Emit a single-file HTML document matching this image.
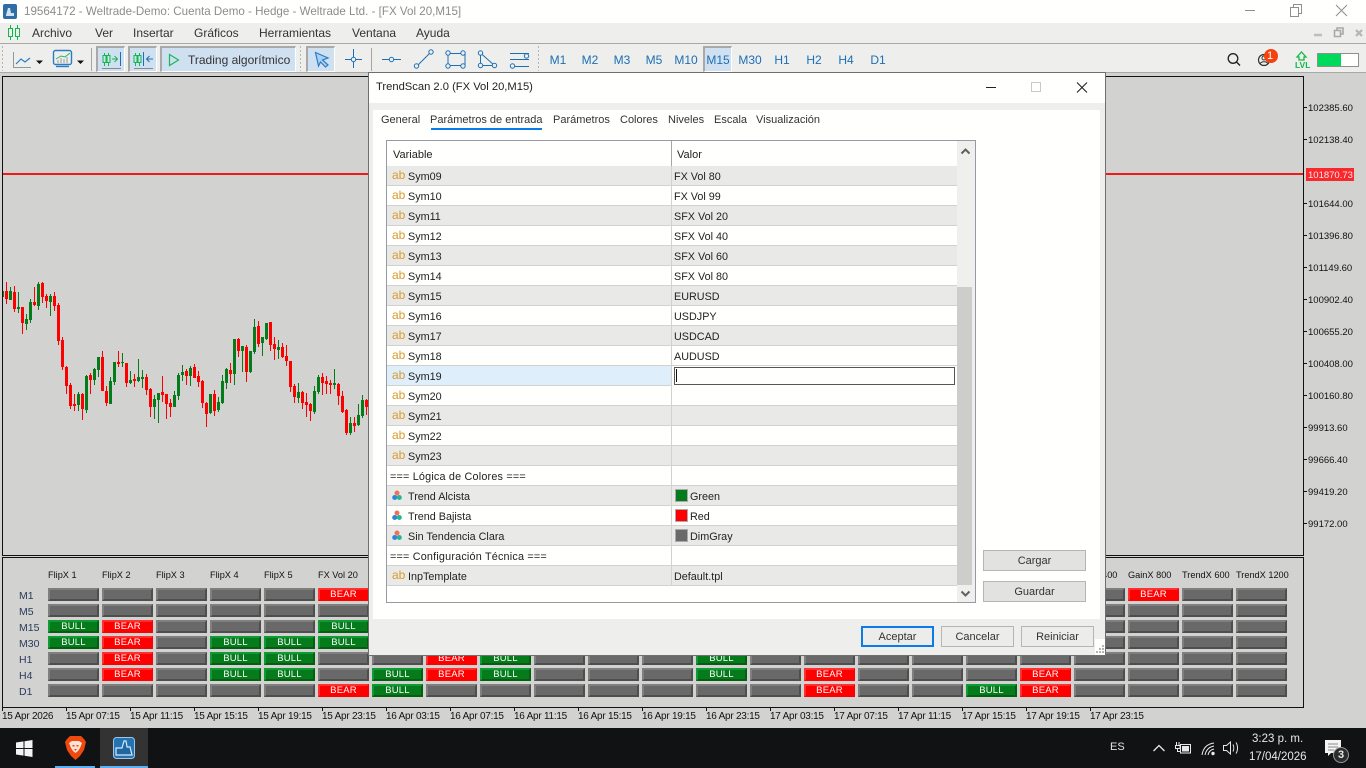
<!DOCTYPE html>
<html lang="es"><head><meta charset="utf-8"><title>TrendScan</title>
<style>
*{box-sizing:border-box}
html,body{margin:0;padding:0;width:1366px;height:768px;overflow:hidden;background:#d2d2d0;font-family:"Liberation Sans",sans-serif;font-size:12px;color:#222}
.a,.t{position:absolute}
.t{white-space:nowrap;line-height:14px}
.tf{top:52px;width:30px;text-align:center;font-size:12px;color:#1c6fb5;line-height:16px}
.on{position:absolute;background:#cfe0f1;border:1px solid #fff;border-top-color:#a9a9a9;border-left-color:#a9a9a9;border-width:2px 1px 1px 2px}
.m{top:26px;font-size:12px;color:#333}
.y{left:1308px;font-size:9.5px;color:#111;line-height:12px}
.x{top:711px;font-size:10px;color:#111;line-height:12px;letter-spacing:-.25px}
.tick{position:absolute;top:707px;width:1px;height:4px;background:#111}
.row{position:absolute;left:48px;display:flex;gap:3px}
.row b{display:block;width:51px;height:13px;background:#696969;border:solid;border-width:2px 2px 2px 2px;border-color:#7f7f7f #4e4e4e #4e4e4e #7f7f7f;font:normal 9.5px/9px "Liberation Sans",sans-serif;color:#fff;text-align:center;letter-spacing:.2px}
.row b.r{background:#fe0000;border-color:#ff3030 #fe0000 #fe0000 #ff3030}
.row b.u{background:#067b1b;border-color:#0f9a35 #04600f #04600f #0f9a35}
.cap{top:569px;font-size:9.2px;color:#111;line-height:12px}
.rl{left:19px;font-size:10.5px;color:#2b3a5c;line-height:14px}
.tab{top:113px;font-size:11px;color:#333}
.grow{position:absolute;left:0;width:570px;height:20px;border-bottom:1px solid #d2d2d0;background:#fffffd}
.grow.o{background:#e9e9e7}
.grow i{position:absolute;left:284px;top:0;width:1px;height:20px;background:#d2d2d0}
.grow .ab{position:absolute;left:5px;top:2px;font-style:normal;font-size:12px;color:#d99a2e;line-height:14px}
.grow .n{position:absolute;left:21px;top:4px;font-size:10.8px;line-height:14px;color:#222;white-space:nowrap}
.grow .v{position:absolute;left:287px;top:4px;font-size:10.8px;line-height:14px;color:#222;white-space:nowrap}
.grow .h{position:absolute;left:3px;top:4px;font-size:10.8px;line-height:14px;color:#222;white-space:nowrap;letter-spacing:.2px}
.grow svg{position:absolute;left:5px;top:4px}
.sw{position:absolute;left:288px;top:3px;width:13px;height:13px;border:1px solid #aaa}
.grow .sv{left:303px}
.btn{position:absolute;height:21px;background:#e2e2e0;border:1px solid #b5b5b3;text-align:center;font-size:11px;line-height:21px;color:#333}
.btn2{background:#ecECEa}
</style></head><body>

<!-- title bar -->
<div class="a" style="left:0;top:0;width:1366px;height:23px;background:#fffffd"></div>
<svg class="a" style="left:3px;top:4px" width="14" height="15" viewBox="0 0 14 15"><rect width="14" height="15" rx="2" fill="#2f6ea5"/><path d="M3 11 L5 4 L7 4 L8 9 L11 9 L11 12 L3 12Z" fill="#cfe2f2"/></svg>
<div class="t" style="left:24px;top:5px;font-size:11.6px;color:#8c8c8c">19564172 - Weltrade-Demo: Cuenta Demo - Hedge - Weltrade Ltd. - [FX Vol 20,M15]</div>
<svg class="a" style="left:1230px;top:0" width="136" height="23" viewBox="0 0 136 23" fill="none" stroke="#8f8f8f"><path d="M15 10.5H25"/><path d="M60.5 7.5h8v9h-8zM63.5 7.5v-3h8v9h-3" /><path d="M106 5L117 16M117 5L106 16"/></svg>

<!-- menu -->
<div class="a" style="left:0;top:23px;width:1366px;height:21px;background:#eeeeec;border-bottom:1px solid #a8a8a6"></div>
<svg class="a" style="left:7px;top:25px" width="14" height="16" viewBox="0 0 14 16" fill="none" stroke="#12b84a"><path d="M3.5 0V15M10.5 0V15"/><path d="M1.5 3.5h4v8h-4zM8.5 3.5h4v8h-4z" fill="#eeeeec"/></svg>
<div class="t m" style="left:32px">Archivo</div>
<div class="t m" style="left:95px">Ver</div>
<div class="t m" style="left:133px">Insertar</div>
<div class="t m" style="left:194px">Gráficos</div>
<div class="t m" style="left:259px">Herramientas</div>
<div class="t m" style="left:352px">Ventana</div>
<div class="t m" style="left:416px">Ayuda</div>
<svg class="a" style="left:1310px;top:26px" width="56" height="14" viewBox="0 0 56 14"><path d="M4 9H12" stroke="#bdbdbb" stroke-width="2.5"/><path d="M24.5 4.5h6v6h-6z M27 4V2h6v6h-2" fill="none" stroke="#a9a9a7" stroke-width="1.6"/><path d="M46 4L52 10M52 4L46 10" stroke="#b5b5b3" stroke-width="2.2"/></svg>

<!-- toolbar -->
<div class="a" style="left:0;top:44px;width:1366px;height:29px;background:#eeeeec;border-bottom:1px solid #a8a8a6"></div>
<div class="a" style="left:0;top:73px;width:1366px;height:3px;background:#d2d2d0"></div>
<div class="on" style="left:96px;top:46px;width:29px;height:26px"></div>
<div class="on" style="left:128px;top:46px;width:29px;height:26px"></div>
<div class="on" style="left:160px;top:46px;width:136px;height:26px"></div>
<div class="on" style="left:306px;top:46px;width:29px;height:26px"></div>
<div class="on" style="left:703px;top:46px;width:29px;height:26px"></div>

<svg class="a" style="left:0;top:44px" width="1366" height="30" viewBox="0 44 1366 30" fill="none">
 <path d="M2.5 46V71M300.5 46V71M538.5 46V71" stroke="#b5b5b3" stroke-dasharray="2 2"/>
 <path d="M91.5 48V71M371.5 48V71" stroke="#a5a5a3"/>
 <path d="M13.5 52V67.5H31" stroke="#8d97a0"/>
 <path d="M16 64L21 59L25 62L30 58" stroke="#2c7cc4" stroke-width="1.2"/>
 <path d="M36 60.5h7l-3.500 3.500z" fill="#111"/>
 <rect x="53.500" y="50.500" width="18" height="14" rx="2" stroke="#2c7cc4" stroke-width="1.400"/>
 <path d="M56 66.500h13" stroke="#2c7cc4" stroke-width="1.400"/>
 <path d="M56 59L61 56L65 57L70 53" stroke="#20b860"/>
 <path d="M58 63V60M61 63V58M64 63V59M67 63V57" stroke="#9a9a9a"/>
 <path d="M77 60.500h7l-3.500 3.500z" fill="#111"/>
 <!-- btn1 -->
 <path d="M104.500 53V66M108.500 53V66" stroke="#12b84a"/><path d="M103 55.500h3v7h-3zM107 55.500h3v7h-3z" stroke="#12b84a" fill="#cfe0f1"/>
 <path d="M112 59H117M114.500 56L117.500 59L114.500 62" stroke="#12b84a"/><path d="M120.500 52V66" stroke="#1c6fb5"/>
 <path d="M102 68.500H121" stroke="#8a8a8a"/>
 <!-- btn2 -->
 <path d="M135.500 53V66M139.500 53V66" stroke="#12b84a"/><path d="M134 55.500h3v7h-3zM138 55.500h3v7h-3z" stroke="#12b84a" fill="#cfe0f1"/>
 <path d="M143.500 52V66" stroke="#1c6fb5"/><path d="M153 59H147M149.500 56L146.500 59L149.500 62" stroke="#1c6fb5"/>
 <path d="M134 68.500H153" stroke="#8a8a8a"/>
 <!-- play -->
 <path d="M169.500 54.500L178.500 60L169.500 65.500Z" stroke="#17b957" stroke-width="1.200"/>
 <!-- cursor -->
 <path d="M315.500 52.500L328 58L322.500 60L328 65L325.500 67L320.500 62L318.500 66Z" fill="#a9d2f2" stroke="#2c7cc4" stroke-width="1.200"/>
 <!-- crosshair -->
 <path d="M353.500 49V68M345 59.500H362" stroke="#1c6fb5"/><circle cx="353.500" cy="59.500" r="2.200" stroke="#1c6fb5" fill="#eeeeec"/>
 <!-- hline -->
 <path d="M382 59.500H401" stroke="#1c6fb5"/><circle cx="391.500" cy="59.500" r="2.200" stroke="#1c6fb5" fill="#eeeeec"/>
 <!-- trend -->
 <path d="M416.500 66.500L431 52" stroke="#1c6fb5"/><circle cx="416.500" cy="66" r="2.200" stroke="#1c6fb5" fill="#eeeeec"/><circle cx="431" cy="52" r="2.200" stroke="#1c6fb5" fill="#eeeeec"/>
 <!-- rect -->
 <path d="M448 53.500H465V65.500H448Z" stroke="#1c6fb5"/>
 <circle cx="448" cy="53" r="2.200" stroke="#1c6fb5" fill="#eeeeec"/><circle cx="448" cy="66" r="2.200" stroke="#1c6fb5" fill="#eeeeec"/><circle cx="463" cy="53" r="2.200" stroke="#1c6fb5" fill="#eeeeec"/><circle cx="463" cy="66" r="2.200" stroke="#1c6fb5" fill="#eeeeec"/>
 <!-- triangle -->
 <path d="M480.500 53V65.500H494.500Z" stroke="#1c6fb5"/>
 <circle cx="480.500" cy="53" r="2.200" stroke="#1c6fb5" fill="#eeeeec"/><circle cx="480.500" cy="65.500" r="2.200" stroke="#1c6fb5" fill="#eeeeec"/><circle cx="494.500" cy="65.500" r="2.200" stroke="#1c6fb5" fill="#eeeeec"/>
 <!-- fibo -->
 <path d="M510 53.500H529M510 59.500H529M510 66.500H529" stroke="#1c6fb5"/>
 <circle cx="526.500" cy="56" r="2.200" stroke="#1c6fb5" fill="#eeeeec"/><circle cx="512.500" cy="66" r="2.200" stroke="#1c6fb5" fill="#eeeeec"/>
 <!-- search -->
 <circle cx="1233" cy="58.500" r="4.800" stroke="#222" stroke-width="1.300"/><path d="M1236.500 62L1240 65.500" stroke="#222" stroke-width="1.400"/>
 <!-- profile -->
 <circle cx="1264" cy="60" r="5.500" stroke="#333" stroke-width="1.200"/><circle cx="1264" cy="58" r="2" stroke="#333"/><path d="M1260 64C1261 61 1267 61 1268 64" stroke="#333"/>
 <circle cx="1271" cy="56" r="7" fill="#f4430e"/>
 <!-- level arrow -->
 <path d="M1301.500 52L1306 57H1304V60H1299V57H1297Z" stroke="#12b84a" stroke-width="1.300"/>
</svg>
<div class="t" style="left:188px;top:52px;font-size:12px;color:#333;line-height:16px">Trading algorítmico</div>
<div class="t tf" style="left:543px">M1</div><div class="t tf" style="left:575px">M2</div><div class="t tf" style="left:607px">M3</div><div class="t tf" style="left:639px">M5</div><div class="t tf" style="left:671px">M10</div><div class="t tf" style="left:703px">M15</div><div class="t tf" style="left:735px">M30</div><div class="t tf" style="left:767px">H1</div><div class="t tf" style="left:799px">H2</div><div class="t tf" style="left:831px">H4</div><div class="t tf" style="left:863px">D1</div>
<div class="t" style="left:1267px;top:49px;font-size:11px;color:#fff;line-height:14px">1</div>
<div class="t" style="left:1295px;top:60px;font-size:8.500px;color:#12b84a;line-height:10px;font-weight:bold">LVL</div>
<div class="a" style="left:1317px;top:53px;width:42px;height:14px;border:1px solid #8f8f8f;background:#fffffd"><div style="width:23px;height:12px;background:#00da5c"></div></div>

<!-- chart frames -->
<div class="a" style="left:2px;top:76px;width:1302px;height:480px;border:1px solid #111;border-width:1px 1px 1px 1px;background:#d2d2d0"></div>
<div class="a" style="left:2px;top:557px;width:1302px;height:151px;border:1px solid #111;background:#d2d2d0"></div>

<!-- candles -->
<svg class="a" style="left:3px;top:270px;overflow:hidden" width="367" height="180" viewBox="9 0 1101 540" fill="none">
<g transform="translate(1.500 0)">
<path stroke="#ff0000" stroke-width="3" d="M18 36V102M42 48V126M66 111V192M102 51V108M126 36V99M138 72V114M162 66V123M174 99V225M186 201V300M198 288V372M210 339V417M222 372V423M246 369V450M270 309V372M306 243V363M318 348V408M354 243V291M378 279V351M402 312V351M438 312V375M450 354V441M486 318V396M498 372V447M510 387V441M558 297V345M582 282V324M594 303V351M606 330V414M618 396V471M642 360V438M690 279V339M714 204V261M738 225V336M774 153V231M810 156V243M822 201V270M846 219V264M858 225V288M870 273V366M882 342V399M906 363V417M918 369V441M930 399V453M966 309V375M978 318V372M990 330V372M1014 339V405M1026 363V429M1038 417V495M1062 441V486M1098 387V435"/>
<path stroke="#ff0000" stroke-width="9" d="M18 63V87M42 66V117M66 111V159M102 96V105M126 39V81M138 78V93M162 78V108M174 105V213M186 210V291M198 291V348M210 345V408M222 402V408M246 372V417M270 315V330M306 261V363M318 363V399M354 276V282M378 279V339M402 327V333M438 321V360M450 357V411M486 366V375M498 372V402M510 399V411M558 303V318M582 291V324M594 318V336M606 333V399M618 399V432M642 372V423M690 300V312M714 207V243M738 231V306M774 168V222M810 156V225M822 222V237M846 231V261M858 258V273M870 273V351M882 348V381M906 366V399M918 396V405M930 402V423M966 321V339M978 333V342M990 339V345M1014 342V378M1026 378V426M1038 420V489M1062 459V468M1098 390V411"/>
<path stroke="#067b1b" stroke-width="3" d="M30 51V90M54 66V129M78 132V180M90 87V159M114 36V120M150 72V138M234 366V423M258 315V429M282 294V345M294 261V321M330 321V402M342 276V345M366 249V291M390 303V342M414 267V336M426 300V354M462 375V447M474 369V459M522 363V411M534 309V390M546 285V333M570 288V348M630 372V432M654 381V426M666 315V402M678 294V357M702 207V345M726 228V306M750 243V309M762 147V252M786 201V258M798 159V210M834 210V267M894 339V399M942 348V432M954 315V372M1002 297V357M1050 441V495M1074 402V468M1086 375V444"/>
<path stroke="#067b1b" stroke-width="9" d="M6 63V81M30 63V90M54 111V117M78 147V162M90 96V150M114 42V108M150 78V96M234 372V405M258 318V420M282 297V330M294 261V300M330 333V402M342 276V336M366 276V279M390 330V339M414 321V333M426 321V327M462 387V411M474 369V390M522 375V411M534 315V378M546 306V315M570 294V318M630 372V429M654 396V420M666 333V399M678 297V339M702 207V312M726 228V243M750 243V306M762 171V246M786 201V219M798 159V207M834 231V240M894 366V384M942 363V426M954 321V366M1002 339V345M1050 459V489M1074 435V465M1086 390V438"/>
</g></svg>

<!-- price line + axis -->
<div class="a" style="left:3px;top:173px;width:1300px;height:2px;background:#f01a1a"></div>
<div class="a" style="left:1306px;top:168px;width:48px;height:13px;background:#f8282c"></div>
<svg class="a" style="left:1304px;top:100px" width="4" height="430" viewBox="0 0 4 430" stroke="#111"><path d="M0 7.500H3M0 39.500H3M0 103.500H3M0 135.500H3M0 167.500H3M0 199.500H3M0 231.500H3M0 263.500H3M0 295.500H3M0 327.500H3M0 359.500H3M0 391.500H3M0 423.500H3"/></svg>
<div class="t y" style="top:103px">102385.60</div>
<div class="t y" style="top:135px">102138.40</div>
<div class="t y" style="top:170px;color:#ffe9e9">101870.73</div>
<div class="t y" style="top:199px">101644.00</div>
<div class="t y" style="top:231px">101396.80</div>
<div class="t y" style="top:263px">101149.60</div>
<div class="t y" style="top:295px">100902.40</div>
<div class="t y" style="top:327px">100655.20</div>
<div class="t y" style="top:359px">100408.00</div>
<div class="t y" style="top:391px">100160.80</div>
<div class="t y" style="top:423px">99913.60</div>
<div class="t y" style="top:455px">99666.40</div>
<div class="t y" style="top:487px">99419.20</div>
<div class="t y" style="top:519px">99172.00</div>

<!-- panel captions -->
<div class="t cap" style="left:48px">FlipX 1</div><div class="t cap" style="left:102px">FlipX 2</div><div class="t cap" style="left:156px">FlipX 3</div><div class="t cap" style="left:210px">FlipX 4</div><div class="t cap" style="left:264px">FlipX 5</div><div class="t cap" style="left:318px">FX Vol 20</div>
<div class="t cap" style="left:1074px">GainX 400</div><div class="t cap" style="left:1128px">GainX 800</div><div class="t cap" style="left:1182px">TrendX 600</div><div class="t cap" style="left:1236px">TrendX 1200</div>
<div class="t rl" style="top:589px">M1</div><div class="t rl" style="top:605px">M5</div><div class="t rl" style="top:621px">M15</div><div class="t rl" style="top:637px">M30</div><div class="t rl" style="top:653px">H1</div><div class="t rl" style="top:669px">H4</div><div class="t rl" style="top:685px">D1</div>

<div class="row" style="top:588px"><b></b><b></b><b></b><b></b><b></b><b class="r">BEAR</b><b></b><b></b><b></b><b></b><b></b><b></b><b></b><b></b><b></b><b></b><b></b><b></b><b></b><b></b><b class="r">BEAR</b><b></b><b></b></div>
<div class="row" style="top:604px"><b></b><b></b><b></b><b></b><b></b><b></b><b></b><b></b><b></b><b></b><b></b><b></b><b></b><b></b><b></b><b></b><b></b><b></b><b></b><b></b><b></b><b></b><b></b></div>
<div class="row" style="top:620px"><b class="u">BULL</b><b class="r">BEAR</b><b></b><b></b><b></b><b class="u">BULL</b><b></b><b></b><b></b><b></b><b></b><b></b><b></b><b></b><b></b><b></b><b></b><b></b><b></b><b></b><b></b><b></b><b></b></div>
<div class="row" style="top:636px"><b class="u">BULL</b><b class="r">BEAR</b><b></b><b class="u">BULL</b><b class="u">BULL</b><b class="u">BULL</b><b></b><b></b><b></b><b></b><b></b><b></b><b></b><b></b><b></b><b></b><b></b><b></b><b></b><b></b><b></b><b></b><b></b></div>
<div class="row" style="top:652px"><b></b><b class="r">BEAR</b><b></b><b class="u">BULL</b><b class="u">BULL</b><b></b><b></b><b class="r">BEAR</b><b class="u">BULL</b><b></b><b></b><b></b><b class="u">BULL</b><b></b><b></b><b></b><b></b><b></b><b></b><b></b><b></b><b></b><b></b></div>
<div class="row" style="top:668px"><b></b><b class="r">BEAR</b><b></b><b class="u">BULL</b><b class="u">BULL</b><b></b><b class="u">BULL</b><b class="r">BEAR</b><b class="u">BULL</b><b></b><b></b><b></b><b class="u">BULL</b><b></b><b class="r">BEAR</b><b></b><b></b><b></b><b class="r">BEAR</b><b></b><b></b><b></b><b></b></div>
<div class="row" style="top:684px"><b></b><b></b><b></b><b></b><b></b><b class="r">BEAR</b><b class="u">BULL</b><b></b><b></b><b></b><b></b><b></b><b></b><b></b><b class="r">BEAR</b><b></b><b></b><b class="u">BULL</b><b class="r">BEAR</b><b></b><b></b><b></b><b></b></div>

<!-- time axis -->
<i class="tick" style="left:2px"></i><i class="tick" style="left:66px"></i><i class="tick" style="left:130px"></i><i class="tick" style="left:194px"></i><i class="tick" style="left:258px"></i><i class="tick" style="left:322px"></i><i class="tick" style="left:386px"></i><i class="tick" style="left:450px"></i><i class="tick" style="left:514px"></i><i class="tick" style="left:578px"></i><i class="tick" style="left:642px"></i><i class="tick" style="left:706px"></i><i class="tick" style="left:770px"></i><i class="tick" style="left:834px"></i><i class="tick" style="left:898px"></i><i class="tick" style="left:962px"></i><i class="tick" style="left:1026px"></i><i class="tick" style="left:1090px"></i>
<div class="t x" style="left:2px">15 Apr 2026</div><div class="t x" style="left:66px">15 Apr 07:15</div><div class="t x" style="left:130px">15 Apr 11:15</div><div class="t x" style="left:194px">15 Apr 15:15</div><div class="t x" style="left:258px">15 Apr 19:15</div><div class="t x" style="left:322px">15 Apr 23:15</div><div class="t x" style="left:386px">16 Apr 03:15</div><div class="t x" style="left:450px">16 Apr 07:15</div><div class="t x" style="left:514px">16 Apr 11:15</div><div class="t x" style="left:578px">16 Apr 15:15</div><div class="t x" style="left:642px">16 Apr 19:15</div><div class="t x" style="left:706px">16 Apr 23:15</div><div class="t x" style="left:770px">17 Apr 03:15</div><div class="t x" style="left:834px">17 Apr 07:15</div><div class="t x" style="left:898px">17 Apr 11:15</div><div class="t x" style="left:962px">17 Apr 15:15</div><div class="t x" style="left:1026px">17 Apr 19:15</div><div class="t x" style="left:1090px">17 Apr 23:15</div>

<!-- dialog -->
<div class="a" style="left:368px;top:72px;width:738px;height:584px;background:#eeeeec;border:1px solid #6f6f6f"></div>
<div class="a" style="left:369px;top:73px;width:736px;height:30px;background:#fffffd"></div>
<div class="t" style="left:376px;top:80px;font-size:11.2px;color:#222">TrendScan 2.0 (FX Vol 20,M15)</div>
<svg class="a" style="left:980px;top:76px" width="115" height="22" viewBox="0 0 115 22" fill="none"><path d="M6 11.500H16" stroke="#222"/><rect x="51.500" y="6.500" width="9" height="9" stroke="#c9c9c9"/><path d="M97 6.500L107 16.500M107 6.500L97 16.500" stroke="#222" stroke-width="1.100"/></svg>
<div class="a" style="left:373px;top:110px;width:727px;height:509px;background:#fffffd"></div>
<div class="t tab" style="left:381px">General</div>
<div class="t tab" style="left:430px">Parámetros de entrada</div>
<div class="a" style="left:431px;top:128px;width:111px;height:2px;background:#0a7be8"></div>
<div class="t tab" style="left:553px">Parámetros</div>
<div class="t tab" style="left:620px">Colores</div>
<div class="t tab" style="left:668px">Niveles</div>
<div class="t tab" style="left:714px">Escala</div>
<div class="t tab" style="left:756px">Visualización</div>

<!-- grid -->
<div class="a" style="left:386px;top:140px;width:590px;height:463px;background:#fffffd;border:1px solid #969aa5"></div>
<div class="a" style="left:671px;top:141px;width:1px;height:25px;background:#a5a5a3"></div>
<div class="t" style="left:393px;top:148px;font-size:11px">Variable</div>
<div class="t" style="left:677px;top:148px;font-size:11px">Valor</div>
<div class="a" style="left:387px;top:166px;width:570px;height:420px">
<div class="grow o" style="top:0"><span class="ab">ab</span><span class="n">Sym09</span><i></i><span class="v">FX Vol 80</span></div>
<div class="grow" style="top:20px"><span class="ab">ab</span><span class="n">Sym10</span><i></i><span class="v">FX Vol 99</span></div>
<div class="grow o" style="top:40px"><span class="ab">ab</span><span class="n">Sym11</span><i></i><span class="v">SFX Vol 20</span></div>
<div class="grow" style="top:60px"><span class="ab">ab</span><span class="n">Sym12</span><i></i><span class="v">SFX Vol 40</span></div>
<div class="grow o" style="top:80px"><span class="ab">ab</span><span class="n">Sym13</span><i></i><span class="v">SFX Vol 60</span></div>
<div class="grow" style="top:100px"><span class="ab">ab</span><span class="n">Sym14</span><i></i><span class="v">SFX Vol 80</span></div>
<div class="grow o" style="top:120px"><span class="ab">ab</span><span class="n">Sym15</span><i></i><span class="v">EURUSD</span></div>
<div class="grow" style="top:140px"><span class="ab">ab</span><span class="n">Sym16</span><i></i><span class="v">USDJPY</span></div>
<div class="grow o" style="top:160px"><span class="ab">ab</span><span class="n">Sym17</span><i></i><span class="v">USDCAD</span></div>
<div class="grow" style="top:180px"><span class="ab">ab</span><span class="n">Sym18</span><i></i><span class="v">AUDUSD</span></div>
<div class="grow" style="top:200px;background:#deeefb"><span class="ab">ab</span><span class="n">Sym19</span><i></i><div class="a" style="left:285px;top:0;width:285px;height:20px;background:#fffffd"></div><div class="a" style="left:287px;top:1px;width:281px;height:18px;background:#fffffd;border:1px solid #555"></div><div class="a" style="left:289px;top:3px;width:1px;height:13px;background:#111"></div></div>
<div class="grow" style="top:220px"><span class="ab">ab</span><span class="n">Sym20</span><i></i></div>
<div class="grow o" style="top:240px"><span class="ab">ab</span><span class="n">Sym21</span><i></i></div>
<div class="grow" style="top:260px"><span class="ab">ab</span><span class="n">Sym22</span><i></i></div>
<div class="grow o" style="top:280px"><span class="ab">ab</span><span class="n">Sym23</span><i></i></div>
<div class="grow" style="top:300px"><span class="h">=== Lógica de Colores ===</span><i></i></div>
<div class="grow o" style="top:320px"><svg width="10" height="11" viewBox="0 0 10 11"><circle cx="5" cy="3" r="2.500" fill="#f0705a"/><circle cx="2.700" cy="7.500" r="2.500" fill="#2f86d8"/><circle cx="7.300" cy="7.500" r="2.500" fill="#22b59a"/></svg><span class="n">Trend Alcista</span><i></i><span class="sw" style="background:#067b1b"></span><span class="v sv">Green</span></div>
<div class="grow" style="top:340px"><svg width="10" height="11" viewBox="0 0 10 11"><circle cx="5" cy="3" r="2.500" fill="#f0705a"/><circle cx="2.700" cy="7.500" r="2.500" fill="#2f86d8"/><circle cx="7.300" cy="7.500" r="2.500" fill="#22b59a"/></svg><span class="n">Trend Bajista</span><i></i><span class="sw" style="background:#fe0000"></span><span class="v sv">Red</span></div>
<div class="grow o" style="top:360px"><svg width="10" height="11" viewBox="0 0 10 11"><circle cx="5" cy="3" r="2.500" fill="#f0705a"/><circle cx="2.700" cy="7.500" r="2.500" fill="#2f86d8"/><circle cx="7.300" cy="7.500" r="2.500" fill="#22b59a"/></svg><span class="n">Sin Tendencia Clara</span><i></i><span class="sw" style="background:#696969"></span><span class="v sv">DimGray</span></div>
<div class="grow" style="top:380px"><span class="h">=== Configuración Técnica ===</span><i></i></div>
<div class="grow o" style="top:400px"><span class="ab">ab</span><span class="n">InpTemplate</span><i></i><span class="v">Default.tpl</span></div>
</div>
<!-- scrollbar -->
<div class="a" style="left:957px;top:141px;width:18px;height:461px;background:#efefed"></div>
<div class="a" style="left:957px;top:287px;width:15px;height:298px;background:#cdcdcb"></div>
<svg class="a" style="left:957px;top:144px" width="17" height="14" viewBox="0 0 17 14" fill="none"><path d="M4.500 9.500L8.500 5.500L12.500 9.500" stroke="#606060" stroke-width="2"/></svg>
<svg class="a" style="left:957px;top:587px" width="17" height="14" viewBox="0 0 17 14" fill="none"><path d="M4.500 4.500L8.500 8.500L12.500 4.500" stroke="#606060" stroke-width="2"/></svg>

<div class="btn" style="left:983px;top:550px;width:103px">Cargar</div>
<div class="btn" style="left:983px;top:581px;width:103px">Guardar</div>
<div class="btn btn2" style="left:861px;top:626px;width:73px;border:2px solid #0a7be8;line-height:19px">Aceptar</div>
<div class="btn btn2" style="left:941px;top:626px;width:73px">Cancelar</div>
<div class="btn btn2" style="left:1021px;top:626px;width:73px">Reiniciar</div>
<div class="a" style="left:1095px;top:639px;width:10px;height:16px;background:#fffffd"></div>
<svg class="a" style="left:1094px;top:644px" width="11" height="10" viewBox="0 0 11 10" fill="#b5b5b3"><rect x="8" y="1" width="2" height="2"/><rect x="5" y="4" width="2" height="2"/><rect x="8" y="4" width="2" height="2"/><rect x="2" y="7" width="2" height="2"/><rect x="5" y="7" width="2" height="2"/><rect x="8" y="7" width="2" height="2"/></svg>

<!-- taskbar -->
<div class="a" style="left:0;top:728px;width:1366px;height:40px;background:#101213"></div>
<div class="a" style="left:100px;top:728px;width:48px;height:40px;background:#333333"></div>
<div class="a" style="left:55px;top:766px;width:40px;height:2px;background:#5cb0f2"></div>
<div class="a" style="left:100px;top:766px;width:48px;height:2px;background:#5cb0f2"></div>
<svg class="a" style="left:16px;top:740px" width="17" height="17" viewBox="0 0 17 17" fill="#f4f4f4"><path d="M0 2.500L7.500 1.400V8H0zM8.500 1.300L16.500 0V8H8.500zM0 9H7.500V15.600L0 14.500zM8.500 9H16.500V17L8.500 15.700z"/></svg>
<svg class="a" style="left:65px;top:735px" width="21" height="25" viewBox="0 0 21 25"><path d="M5 1H16L19 4L21 7L19 15L15 21L10.500 25L6 21L2 15L0 7L2 4Z" fill="#f0490f"/><path d="M4 8L7 6H14L17 8L15 13L13 16L10.500 18L8 16L6 13Z" fill="#fbe4d6"/><path d="M7.500 10H9.500V11.500H7.500ZM11.500 10H13.500V11.500H11.500ZM9 14H12L10.500 16Z" fill="#f0490f"/></svg>
<svg class="a" style="left:113px;top:737px" width="22" height="22" viewBox="0 0 22 22"><rect x=".5" y=".5" width="21" height="21" rx="3" fill="#2474b3" stroke="#9fc6e6"/><path d="M3 18V11H9L11 4H13L14 10H17L19 18Z" fill="#1f67a1" stroke="#d6e8f6" stroke-width="1.200"/></svg>
<div class="t" style="left:1110px;top:740px;font-size:11px;color:#e4e4e4">ES</div>
<svg class="a" style="left:1150px;top:738px" width="90" height="24" viewBox="0 0 90 24" fill="none" stroke="#e8e8e8"><path d="M3.500 13L9 7.500L14.500 13" stroke-width="1.300"/><path d="M30.500 6.500h10v8.500h-10z"/><path d="M32 8h7v5.500h-7z" fill="#e8e8e8" stroke="none"/><path d="M26.500 4v3M29 4v3M25.500 7.500h4.500v3h-4.500zM27.500 10.500v3h3" /><path d="M52 17C53 10 57 6 64 5M55 17C56 12 59 9 64 8M58 17C58.500 14 60 12 64 11" stroke-width="1"/><circle cx="63" cy="15.500" r="1.200" fill="#e8e8e8"/><path d="M73.500 7.500h3l4-3.500v12l-4-3.500h-3z"/><path d="M83 6.500c1 2 1 5 0 7M86 4.500c2 3 2 8 0 11" stroke-width="1"/></svg>
<div class="t" style="left:1252px;top:732px;font-size:11.500px;color:#e8e8e8">3:23 p. m.</div>
<div class="t" style="left:1249px;top:750px;font-size:11.500px;color:#e8e8e8">17/04/2026</div>
<svg class="a" style="left:1324px;top:738px" width="30" height="26" viewBox="0 0 30 26"><path d="M1 2H17V15H7L4 18V15H1Z" fill="#f4f4f4"/><path d="M4 6H14M4 9H14M4 12H10" stroke="#888" stroke-width="1"/><circle cx="17" cy="17" r="7.500" fill="#2c2c2c" stroke="#999"/></svg>
<div class="t" style="left:1338px;top:748px;font-size:11px;font-weight:bold;color:#e8e8e8">3</div>
</body></html>
